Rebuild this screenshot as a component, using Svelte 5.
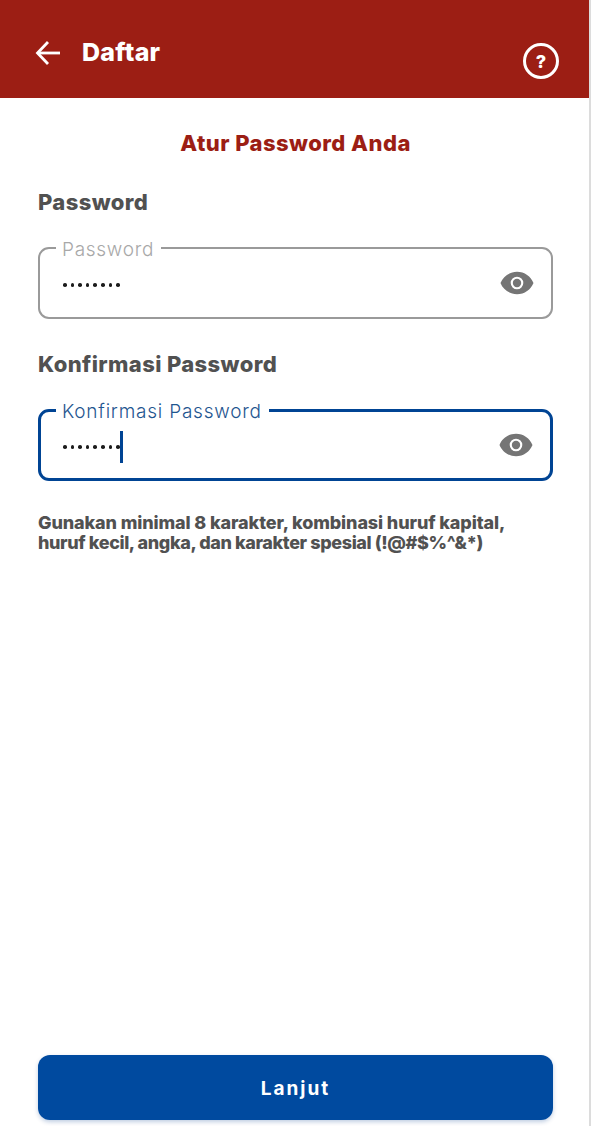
<script>
  const fields = [
    { label: 'Password', focused: false },
    { label: 'Konfirmasi Password', focused: true }
  ];
</script>

<div class="page">
  <header class="bar">
    <div class="bar-left">
      <svg class="back" width="26" height="26" viewBox="0 0 26 26" fill="none" stroke="#fff" stroke-width="2.8">
        <path d="M25 13H3" />
        <path d="M13 2 2.500 13 13 24" />
      </svg>
      <h1>Daftar</h1>
    </div>
    <div class="help">?</div>
  </header>

  <main class="content">
    <h2>Atur Password Anda</h2>

    {#each fields as f}
      <div class="label">{f.label}</div>
      <fieldset class="field" class:focused={f.focused}>
        <legend>{f.label}</legend>
        <div class="value">
          <span class="dots">{#each Array(8) as _}<i></i>{/each}</span>
          {#if f.focused}<span class="caret"></span>{/if}
        </div>
        <svg class="eye" width="36" height="36" viewBox="0 0 24 24">
          <path fill="#757575" fill-rule="evenodd" d="M12 4.500C7 4.500 2.730 7.610 1 12c1.730 4.390 6 7.500 11 7.500s9.270-3.110 11-7.500c-1.730-4.390-6-7.500-11-7.500zM12 16.200a4.200 4.200 0 1 1 0-8.400 4.200 4.200 0 0 1 0 8.400z" />
          <circle cx="12" cy="12" r="2.800" fill="#757575" />
        </svg>
      </fieldset>
    {/each}

    <div class="hint">
      <p>Gunakan minimal 8 karakter, kombinasi huruf kapital,</p>
      <p class="second">huruf kecil, angka, dan karakter spesial (!@#$%^&amp;*)</p>
    </div>

    <button class="next">Lanjut</button>
  </main>
</div>

<style>
  :global(body) {
    margin: 0;
    background: #fff;
  }
  .page {
    width: 589px;
    height: 1126px;
    display: flex;
    flex-direction: column;
    border-right: 2px solid #dcdcdc;
    font-family: Inter, "Liberation Sans", sans-serif;
    overflow: hidden;
  }
  .bar {
    height: 98px;
    width: 591px;
    flex: none;
    box-sizing: border-box;
    background: #9c1e14;
    padding: 0 32px 0 35px;
    display: flex;
    justify-content: space-between;
  }
  .bar-left {
    display: flex;
    align-items: center;
    gap: 21px;
    height: 105px;
  }
  h1 {
    margin: 0;
    font-size: 25px;
    font-weight: 800;
    color: #fff;
    letter-spacing: 0.25px;
    line-height: 1;
  }
  .help {
    margin-top: 43px;
    width: 36px;
    height: 36px;
    box-sizing: border-box;
    border: 3px solid #fff;
    border-radius: 50%;
    color: #fff;
    font-size: 18px;
    font-weight: 800;
    display: flex;
    align-items: center;
    justify-content: center;
  }
  .content {
    flex: 1;
    display: flex;
    flex-direction: column;
    padding: 0 36px 6px 38px;
  }
  h2 {
    margin: 31px 0 0;
    text-align: center;
    font-size: 22px;
    line-height: 28px;
    font-weight: 800;
    color: #9c1e14;
    letter-spacing: 0.45px;
  }
  .label {
    margin-top: 31px;
    font-size: 22px;
    line-height: 28px;
    font-weight: 800;
    color: #515151;
    letter-spacing: 0.38px;
  }
  .field {
    margin: 18px 0 0;
    padding: 7px 16px 0 23px;
    height: 85px;
    box-sizing: border-box;
    border: 2px solid #9a9a9a;
    border-radius: 11px;
    display: flex;
    align-items: center;
    justify-content: space-between;
    min-inline-size: 0;
  }
  legend {
    padding: 4px 7px 0 6px;
    margin-left: -7px;
    font-size: 19px;
    line-height: 24px;
    font-weight: 300;
    color: #a8a8a8;
    letter-spacing: 0.72px;
  }
  .focused {
    border: 3px solid #004494;
    padding-left: 22px;
  }
  .focused legend {
    color: #1f5690;
    letter-spacing: 0.78px;
  }
  .value {
    display: flex;
    align-items: center;
    height: 32px;
  }
  .dots {
    display: flex;
    gap: 4px;
  }
  .dots i {
    display: block;
    width: 3.6px;
    height: 3.6px;
    border-radius: 50%;
    background: #1c1c1c;
  }
  .caret {
    width: 3.5px;
    height: 32px;
    background: #004494;
  }
  .eye {
    flex: none;
    margin-top: -4px;
  }
  .hint {
    margin-top: 32px;
    font-size: 18px;
    line-height: 20px;
    font-weight: 800;
    color: #515151;
    letter-spacing: -0.12px;
  }
  .hint p {
    margin: 0;
    white-space: nowrap;
  }
  .hint .second {
    letter-spacing: -0.39px;
  }
  .next {
    margin-top: auto;
    height: 65px;
    width: 515px;
    flex: none;
    border: 0;
    border-radius: 12px;
    background: #004a9f;
    color: #fff;
    font-family: Inter, "Liberation Sans", sans-serif;
    font-size: 19px;
    font-weight: 700;
    letter-spacing: 2px;
    padding-top: 2px;
    box-shadow: 0 2px 4px rgba(0, 60, 140, 0.25);
  }
</style>
